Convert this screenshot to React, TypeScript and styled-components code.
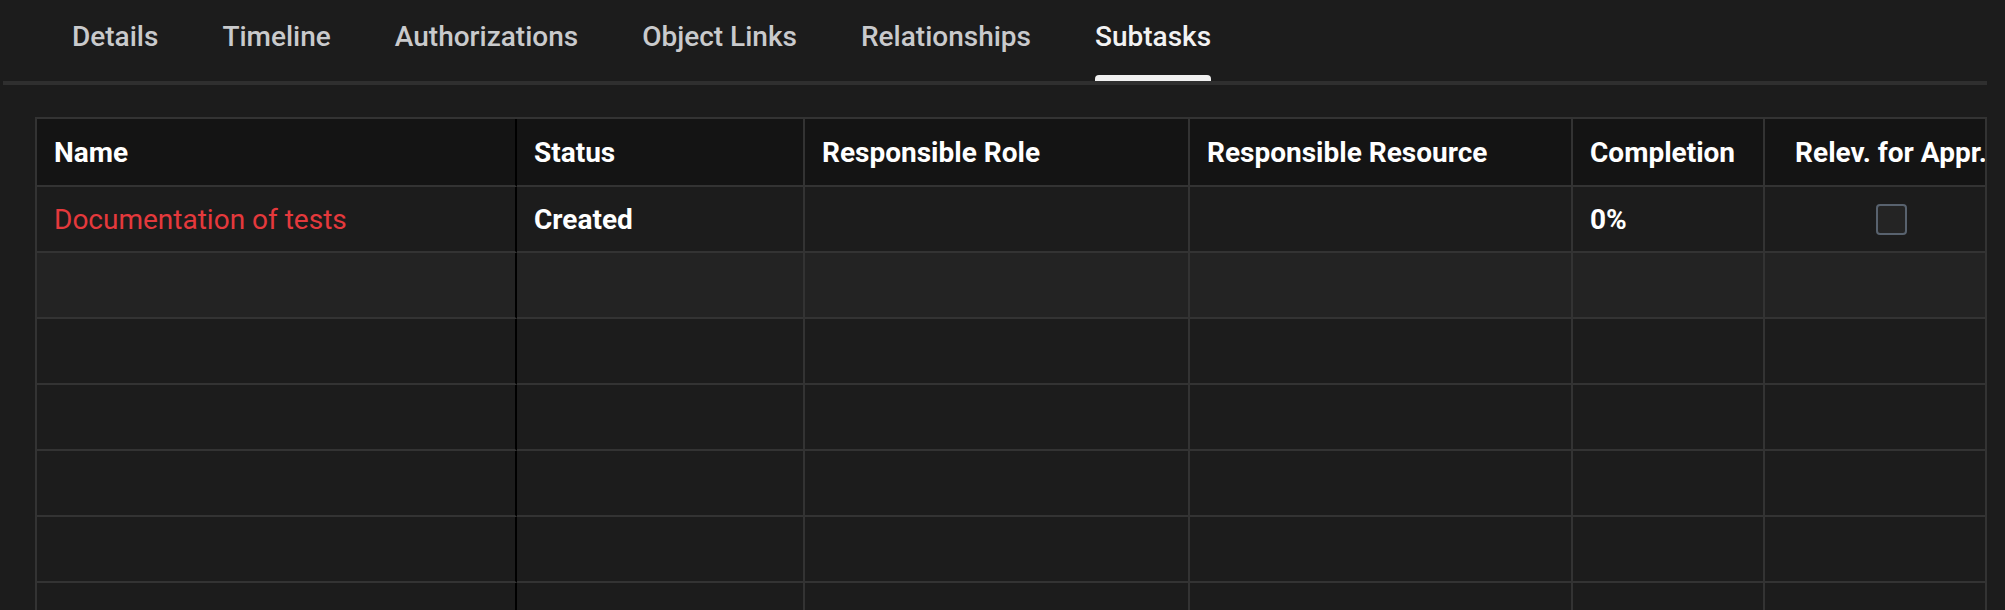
import React from "react";
import styled, { createGlobalStyle } from "styled-components";

const GlobalStyle = createGlobalStyle`
  html, body {
    margin: 0;
    padding: 0;
    background: #1c1c1c;
    overflow: hidden;
  }
  body {
    font-family: Roboto, "Liberation Sans", Arial, sans-serif;
    color: #f2f2f2;
  }
`;

const Page = styled.div`
  width: 2005px;
  height: 610px;
  background: #1c1c1c;
  padding: 0 18px 0 3px;
  box-sizing: border-box;
  overflow: hidden;
`;

const TabBar = styled.nav`
  display: flex;
  gap: 64px;
  padding-left: 69px;
  border-bottom: 4px solid #2f2f2f;
`;

const Tab = styled.div<{ $active?: boolean }>`
  display: flex;
  flex-direction: column;
  font-size: 28px;
  font-weight: 500;
  line-height: 32px;
  color: ${(p) => (p.$active ? "#f2f2f2" : "#c9cacc")};
  padding-top: 21px;
  white-space: nowrap;
  &::after {
    content: "";
    display: block;
    height: 6px;
    margin-top: 22px;
    border-radius: 4px 4px 0 0;
    background: ${(p) => (p.$active ? "#f0f0f0" : "transparent")};
  }
`;

const TableFrame = styled.div`
  margin: 32px 0 0 32px;
  border: 2px solid #333333;
  border-bottom: none;
  overflow: hidden;
`;

const Grid = styled.div`
  display: grid;
  grid-template-columns: 480px 288px 385px 383px 192px 254px;
  width: max-content;
`;

const HeadCell = styled.div<{ $center?: boolean; $dark?: boolean }>`
  box-sizing: border-box;
  height: 68px;
  background: #141414;
  border-bottom: 2px solid #333333;
  border-right: 2px solid ${(p) => (p.$dark ? "#000" : "#333333")};
  display: flex;
  align-items: center;
  justify-content: ${(p) => (p.$center ? "center" : "flex-start")};
  padding: 0 17px;
  font-size: 28px;
  font-weight: 700;
  color: #ffffff;
  white-space: nowrap;
`;

const Cell = styled.div<{ $alt?: boolean; $center?: boolean; $dark?: boolean; $tone?: "red" | "strong" }>`
  box-sizing: border-box;
  height: 66px;
  background: ${(p) => (p.$alt ? "#232323" : "#1c1c1c")};
  border-bottom: 2px solid #333333;
  border-right: 2px solid ${(p) => (p.$dark ? "#000" : "#333333")};
  display: flex;
  align-items: center;
  justify-content: ${(p) => (p.$center ? "center" : "flex-start")};
  padding: 0 17px;
  font-size: 28px;
  font-weight: ${(p) => (p.$tone === "strong" ? 700 : 400)};
  color: ${(p) => (p.$tone === "red" ? "#e5393c" : "#ffffff")};
  white-space: nowrap;
`;

const CheckBox = styled.span`
  box-sizing: border-box;
  width: 31px;
  height: 31px;
  border: 2px solid #58626e;
  border-radius: 4px;
  background: #242424;
`;

const columns = [
  "Name",
  "Status",
  "Responsible Role",
  "Responsible Resource",
  "Completion",
  "Relev. for Appr.",
];

type Row = { name: string; status: string; completion: string; check: boolean } | null;

const rows: Row[] = [
  { name: "Documentation of tests", status: "Created", completion: "0%", check: true },
  null,
  null,
  null,
  null,
  null,
  null,
  null,
];

export default function App() {
  const tabs = ["Details", "Timeline", "Authorizations", "Object Links", "Relationships", "Subtasks"];
  return (
    <>
      <GlobalStyle />
      <Page>
        <TabBar>
          {tabs.map((t) => (
            <Tab key={t} $active={t === "Subtasks"}>
              {t}
            </Tab>
          ))}
        </TabBar>
        <TableFrame>
          <Grid>
            {columns.map((c, i) => (
              <HeadCell key={c} $dark={i === 0} $center={i === 5}>
                {c}
              </HeadCell>
            ))}
            {rows.map((r, ri) => {
              const alt = ri === 1;
              return (
                <React.Fragment key={ri}>
                  <Cell $alt={alt} $dark $tone="red">{r?.name}</Cell>
                  <Cell $alt={alt} $tone="strong">{r?.status}</Cell>
                  <Cell $alt={alt} />
                  <Cell $alt={alt} />
                  <Cell $alt={alt} $tone="strong">{r?.completion}</Cell>
                  <Cell $alt={alt} $center>
                    {r?.check ? <CheckBox /> : null}
                  </Cell>
                </React.Fragment>
              );
            })}
          </Grid>
        </TableFrame>
      </Page>
    </>
  );
}
